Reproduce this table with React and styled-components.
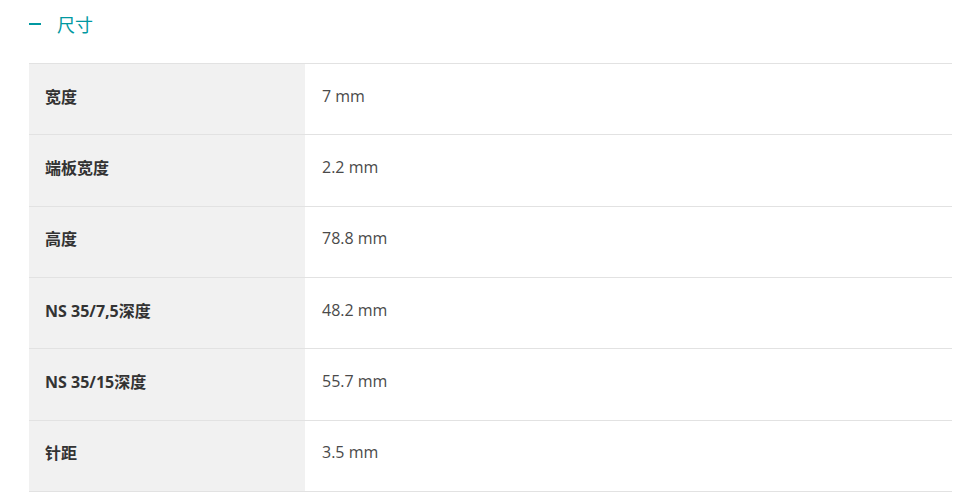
import React from "react";
import styled, { createGlobalStyle } from "styled-components";

const GlobalStyle = createGlobalStyle`
  body {
    margin: 0;
    background: #fff;
    font-family: "Open Sans", "Noto Sans CJK SC", sans-serif;
    color: #333;
  }
`;

const specs = [
  { label: "宽度", value: "7 mm" },
  { label: "端板宽度", value: "2.2 mm" },
  { label: "高度", value: "78.8 mm" },
  { label: "NS 35/7,5深度", value: "48.2 mm" },
  { label: "NS 35/15深度", value: "55.7 mm" },
  { label: "针距", value: "3.5 mm" },
];

const Section = styled.section`
  padding: 11px 13px 0 29px;
`;

const Heading = styled.button`
  display: flex;
  align-items: center;
  gap: 16px;
  height: 26px;
  padding: 0;
  margin: 0 0 26px;
  border: none;
  background: transparent;
  color: #0098a1;
  font-family: "Noto Sans CJK SC", sans-serif;
  font-size: 18px;
  cursor: pointer;
`;

const Minus = styled.span`
  display: block;
  width: 12px;
  height: 2px;
  background: #0098a1;
`;

const Table = styled.table`
  width: 100%;
  border-collapse: collapse;
  border-top: 1px solid #e2e2e2;
`;

const Row = styled.tr`
  height: 71.33px;
  border-bottom: 1px solid #e2e2e2;
`;

const Label = styled.th`
  width: 276px;
  box-sizing: border-box;
  padding: 0 16px 7px;
  background: #f1f1f1;
  text-align: left;
  font-family: "Open Sans", "Noto Sans CJK SC", sans-serif;
  font-size: 16px;
  font-weight: 700;
  color: #333;
`;

const Value = styled.td`
  padding: 0 17px 7px;
  font-size: 16px;
  color: #4a4a4a;
`;

export default function App() {
  return (
    <>
      <GlobalStyle />
      <Section>
        <Heading>
          <Minus />
          尺寸
        </Heading>
        <Table>
          <tbody>
            {specs.map((s) => (
              <Row key={s.label}>
                <Label>{s.label}</Label>
                <Value>{s.value}</Value>
              </Row>
            ))}
          </tbody>
        </Table>
      </Section>
    </>
  );
}
